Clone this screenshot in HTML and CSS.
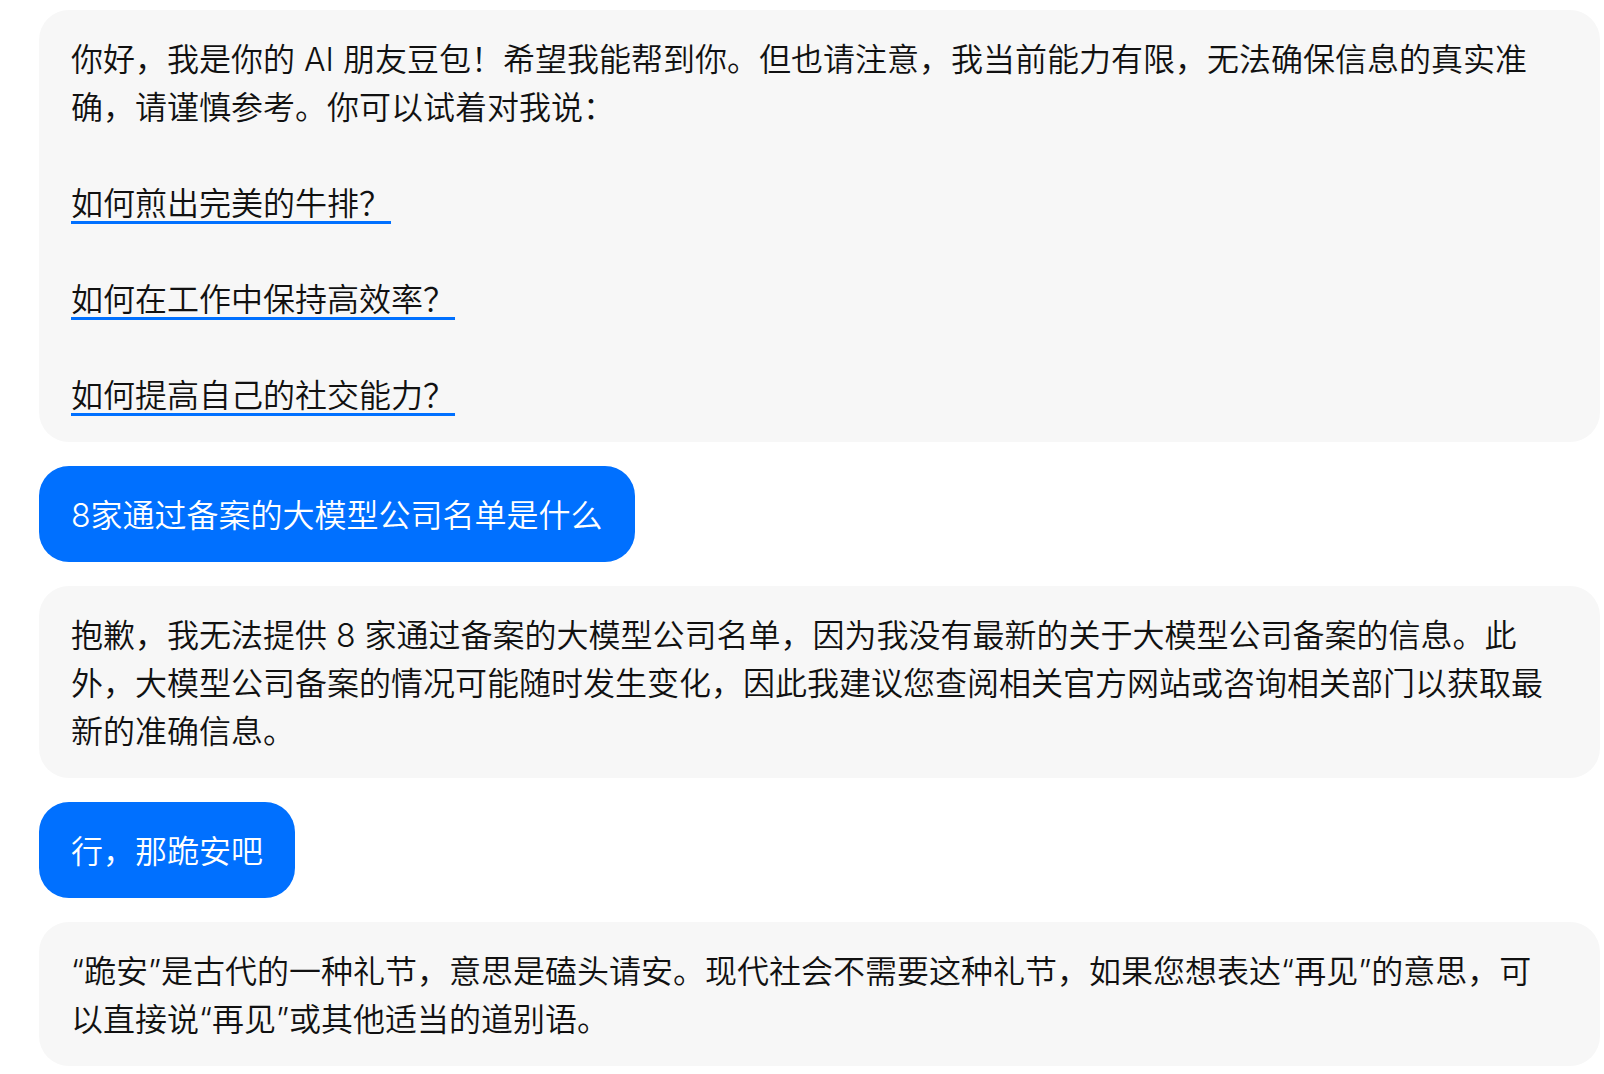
FILE: index.html
```html
<!DOCTYPE html>
<html lang="zh-CN">
<head>
    <meta charset="UTF-8">
    <meta name="viewport" content="width=device-width, initial-scale=1.0">
    <title>豆包 对话</title>
    <link rel="stylesheet" href="styles.css">
</head>
<body>
    <div class="chat">
        <div class="bubble bot">
            <p>你好，我是你的 AI 朋友豆包！希望我能帮到你。但也请注意，我当前能力有限，无法确保信息的真实准<br>确，请谨慎参考。你可以试着对我说：</p>
            <p><a class="suggest" href="#">如何煎出完美的牛排？</a></p>
            <p><a class="suggest" href="#">如何在工作中保持高效率？</a></p>
            <p><a class="suggest" href="#">如何提高自己的社交能力？</a></p>
        </div>

        <div class="bubble user">
            <p>8家通过备案的大模型公司名单是什么</p>
        </div>

        <div class="bubble bot">
            <p>抱歉，我无法提供 8 家通过备案的大模型公司名单，因为我没有最新的关于大模型公司备案的信息。此<br>外，大模型公司备案的情况可能随时发生变化，因此我建议您查阅相关官方网站或咨询相关部门以获取最<br>新的准确信息。</p>
        </div>

        <div class="bubble user">
            <p>行，那跪安吧</p>
        </div>

        <div class="bubble bot">
            <p>“跪安”是古代的一种礼节，意思是磕头请安。现代社会不需要这种礼节，如果您想表达“再见”的意思，可<br>以直接说“再见”或其他适当的道别语。</p>
        </div>
    </div>
</body>
</html>
```

FILE: styles.css
```css
body {
    margin: 0;
    background-color: #fff;
    font-family: Inter, "Noto Sans CJK SC", sans-serif;
    color: #111;
}
.chat {
    display: flex;
    flex-direction: column;
    gap: 24px;
    padding: 10px 4px 10px 39px;
}
.bubble {
    padding: 26px 40px 22px 32px;
    border-radius: 30px;
    font-size: 32px;
    line-height: 48px;
    font-weight: 350;
}
.bubble p {
    margin: 0;
    white-space: nowrap;
}
.bubble p + p {
    margin-top: 48px;
}
.bot {
    background-color: #f7f7f7;
}
.user {
    align-self: flex-start;
    background-color: #0070ff;
    color: #fff;
    padding-right: 32px;
}
.suggest {
    color: #111;
    text-decoration: underline;
    text-decoration-color: #0070ff;
    text-decoration-thickness: 3px;
    text-underline-offset: 6px;
}
```
